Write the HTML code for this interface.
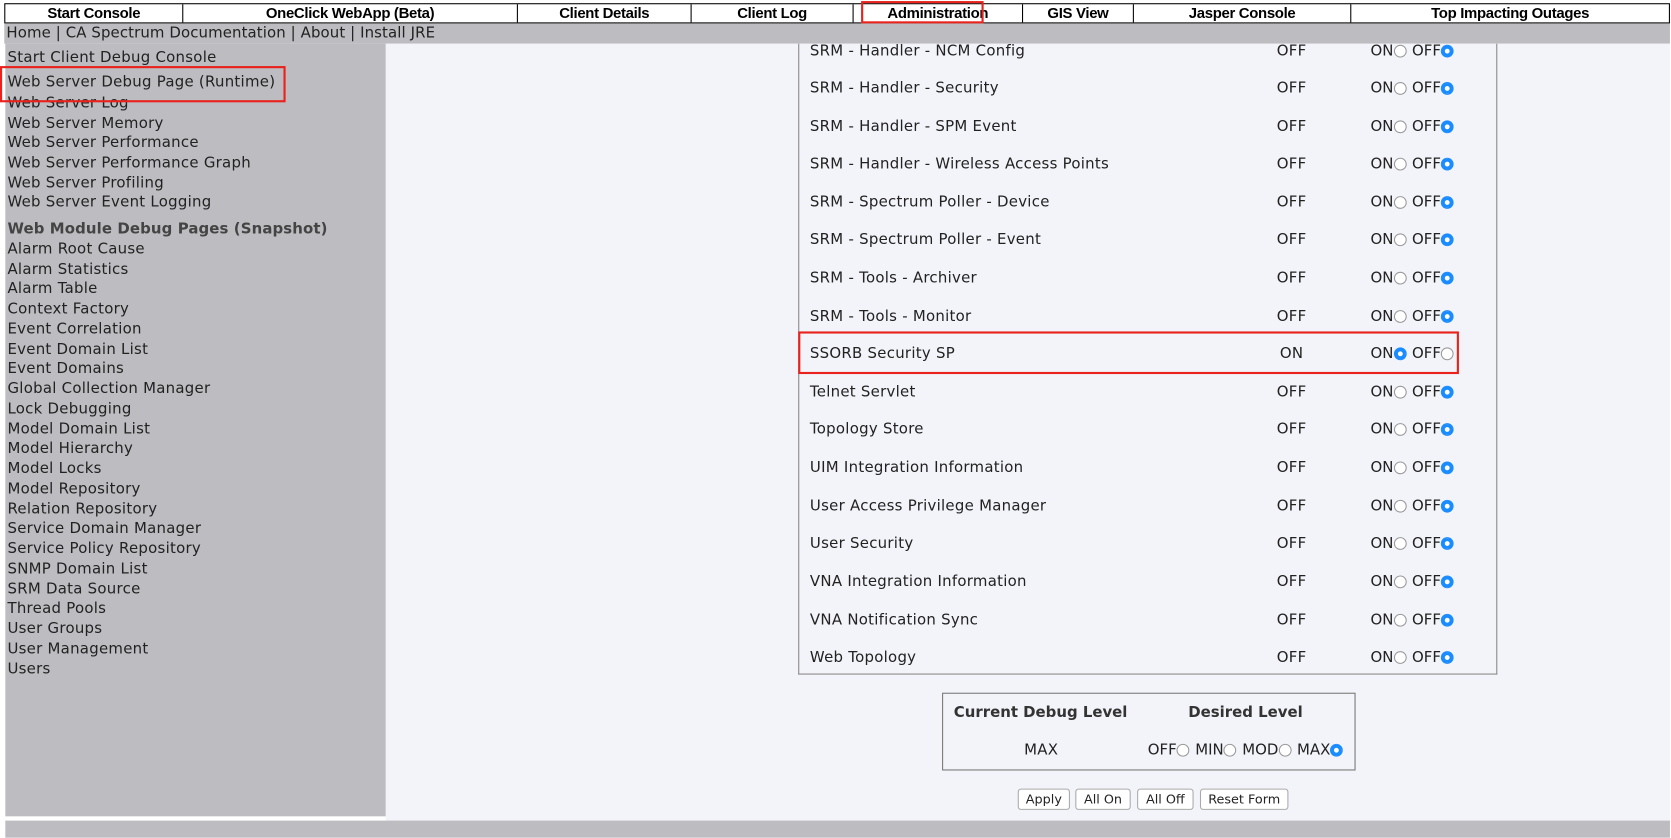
<!DOCTYPE html>
<html><head><meta charset="utf-8"><style>
*{margin:0;padding:0;box-sizing:border-box}
html,body{width:1671px;height:837px;overflow:hidden;background:#fff}
#w{position:absolute;left:0;top:0;width:1568px;height:786px;transform:scale(1.0657);transform-origin:0 0;font-family:"DejaVu Sans","Liberation Sans",sans-serif;font-size:14px;color:#222;letter-spacing:0.25px}
.nav{position:absolute;top:3px;left:4px;width:1563px;height:19px;border:1px solid #000;background:#fff;display:flex}
.nav div{flex:none;border-right:1px solid #000;text-align:center;font-family:"Liberation Sans",sans-serif;font-weight:bold;font-size:14px;line-height:17px;letter-spacing:-0.3px;color:#000}
.nav div:last-child{border-right:none}
.bar{position:absolute;top:22px;left:4px;width:1563px;height:19px;background:#bdbcc1;line-height:19px;padding-left:2px;font-size:14px;color:#222;letter-spacing:0.1px}
.side{position:absolute;top:41px;left:5px;width:357px;height:725px;background:#bdbcc1}
.side div{position:absolute;left:2px;white-space:nowrap;line-height:18px}
.main{position:absolute;top:41px;left:362px;width:1205px;height:729px;background:#f3f4f9;overflow:hidden}
.bot{position:absolute;top:770px;left:5px;width:1562px;height:16px;background:#bdbcc1}
.tbl{position:absolute;left:387px;top:-20px;width:656px;height:612px;border:1px solid #888;border-top:none}
.row{position:absolute;left:0;width:654px;height:20px;line-height:20px;margin-top:2px}
.row .n{position:absolute;left:10px}
.row .s{position:absolute;left:432px;width:60px;text-align:center}
.row .r{position:absolute;left:536px;letter-spacing:0}
.rad{display:inline-block;width:12px;height:12px;border-radius:50%;border:1px solid #999;background:#fff;vertical-align:-2px;margin:0 1px 0 0}
.rad.on{border-color:#1a8cff;background:radial-gradient(circle,#fff 0 2px,#1a8cff 2.5px)}
.red{position:absolute;border:2px solid #e8221c}
.lvl{position:absolute;left:522px;top:609px;width:388px;height:73px;border:1px solid #777}
.btn{position:absolute;top:699px;height:20px;border:1px solid #aaa;border-radius:3px;background:#fff;font-size:12px;line-height:18px;text-align:center;letter-spacing:0}
</style></head><body><div id="w">
<div class="nav">
<div style="width:167px">Start Console</div>
<div style="width:314px">OneClick WebApp (Beta)</div>
<div style="width:163px">Client Details</div>
<div style="width:152px">Client Log</div>
<div style="width:159px">Administration</div>
<div style="width:104px">GIS View</div>
<div style="width:204px">Jasper Console</div>
<div style="width:298px">Top Impacting Outages</div>
</div>
<div class="red" style="left:808px;top:1px;width:115px;height:21px"></div>
<div class="bar">Home | CA Spectrum Documentation | About | Install JRE</div>
<div class="side">
<div style="top:4px">Start Client Debug Console</div>
<div style="top:27px">Web Server Debug Page (Runtime)</div>
<div style="top:47px">Web Server Log</div>
<div style="top:66px">Web Server Memory</div>
<div style="top:84px">Web Server Performance</div>
<div style="top:103px">Web Server Performance Graph</div>
<div style="top:122px">Web Server Profiling</div>
<div style="top:140px">Web Server Event Logging</div>
<div style="top:165px;font-weight:bold;color:#444;letter-spacing:0.1px">Web Module Debug Pages (Snapshot)</div>
<div style="top:184px">Alarm Root Cause</div>
<div style="top:203px">Alarm Statistics</div>
<div style="top:221px">Alarm Table</div>
<div style="top:240px">Context Factory</div>
<div style="top:259px">Event Correlation</div>
<div style="top:278px">Event Domain List</div>
<div style="top:296px">Event Domains</div>
<div style="top:315px">Global Collection Manager</div>
<div style="top:334px">Lock Debugging</div>
<div style="top:353px">Model Domain List</div>
<div style="top:371px">Model Hierarchy</div>
<div style="top:390px">Model Locks</div>
<div style="top:409px">Model Repository</div>
<div style="top:428px">Relation Repository</div>
<div style="top:446px">Service Domain Manager</div>
<div style="top:465px">Service Policy Repository</div>
<div style="top:484px">SNMP Domain List</div>
<div style="top:503px">SRM Data Source</div>
<div style="top:521px">Thread Pools</div>
<div style="top:540px">User Groups</div>
<div style="top:559px">User Management</div>
<div style="top:578px">Users</div>
</div>
<div class="red" style="left:0;top:62px;width:268px;height:34px"></div>
<div class="main">
<div class="tbl">
<div class="row" style="top:15px"><span class="n">SRM - Handler - NCM Config</span><span class="s">OFF</span><span class="r">ON<i class="rad"></i> OFF<i class="rad on"></i></span></div>
<div class="row" style="top:50px"><span class="n">SRM - Handler - Security</span><span class="s">OFF</span><span class="r">ON<i class="rad"></i> OFF<i class="rad on"></i></span></div>
<div class="row" style="top:86px"><span class="n">SRM - Handler - SPM Event</span><span class="s">OFF</span><span class="r">ON<i class="rad"></i> OFF<i class="rad on"></i></span></div>
<div class="row" style="top:121px"><span class="n">SRM - Handler - Wireless Access Points</span><span class="s">OFF</span><span class="r">ON<i class="rad"></i> OFF<i class="rad on"></i></span></div>
<div class="row" style="top:157px"><span class="n">SRM - Spectrum Poller - Device</span><span class="s">OFF</span><span class="r">ON<i class="rad"></i> OFF<i class="rad on"></i></span></div>
<div class="row" style="top:192px"><span class="n">SRM - Spectrum Poller - Event</span><span class="s">OFF</span><span class="r">ON<i class="rad"></i> OFF<i class="rad on"></i></span></div>
<div class="row" style="top:228px"><span class="n">SRM - Tools - Archiver</span><span class="s">OFF</span><span class="r">ON<i class="rad"></i> OFF<i class="rad on"></i></span></div>
<div class="row" style="top:264px"><span class="n">SRM - Tools - Monitor</span><span class="s">OFF</span><span class="r">ON<i class="rad"></i> OFF<i class="rad on"></i></span></div>
<div class="row" style="top:299px"><span class="n">SSORB Security SP</span><span class="s">ON</span><span class="r">ON<i class="rad on"></i> OFF<i class="rad"></i></span></div>
<div class="row" style="top:335px"><span class="n">Telnet Servlet</span><span class="s">OFF</span><span class="r">ON<i class="rad"></i> OFF<i class="rad on"></i></span></div>
<div class="row" style="top:370px"><span class="n">Topology Store</span><span class="s">OFF</span><span class="r">ON<i class="rad"></i> OFF<i class="rad on"></i></span></div>
<div class="row" style="top:406px"><span class="n">UIM Integration Information</span><span class="s">OFF</span><span class="r">ON<i class="rad"></i> OFF<i class="rad on"></i></span></div>
<div class="row" style="top:442px"><span class="n">User Access Privilege Manager</span><span class="s">OFF</span><span class="r">ON<i class="rad"></i> OFF<i class="rad on"></i></span></div>
<div class="row" style="top:477px"><span class="n">User Security</span><span class="s">OFF</span><span class="r">ON<i class="rad"></i> OFF<i class="rad on"></i></span></div>
<div class="row" style="top:513px"><span class="n">VNA Integration Information</span><span class="s">OFF</span><span class="r">ON<i class="rad"></i> OFF<i class="rad on"></i></span></div>
<div class="row" style="top:549px"><span class="n">VNA Notification Sync</span><span class="s">OFF</span><span class="r">ON<i class="rad"></i> OFF<i class="rad on"></i></span></div>
<div class="row" style="top:584px"><span class="n">Web Topology</span><span class="s">OFF</span><span class="r">ON<i class="rad"></i> OFF<i class="rad on"></i></span></div>
</div>
<div class="red" style="left:387px;top:270px;width:620px;height:40px"></div>
<div class="lvl">
<div style="position:absolute;left:10px;top:10px;font-weight:bold;color:#333;letter-spacing:0">Current Debug Level</div>
<div style="position:absolute;left:230px;top:10px;font-weight:bold;color:#333;letter-spacing:0">Desired Level</div>
<div style="position:absolute;left:76px;top:45px">MAX</div>
<div style="position:absolute;left:192px;top:45px;white-space:nowrap;letter-spacing:0">OFF<i class="rad"></i> MIN<i class="rad"></i> MOD<i class="rad"></i> MAX<i class="rad on"></i></div>
</div>
<div class="btn" style="left:593px;width:49px">Apply</div>
<div class="btn" style="left:647px;width:52px">All On</div>
<div class="btn" style="left:705px;width:53px">All Off</div>
<div class="btn" style="left:764px;width:83px">Reset Form</div>
</div>
<div class="bot"></div>
</div></body></html>
